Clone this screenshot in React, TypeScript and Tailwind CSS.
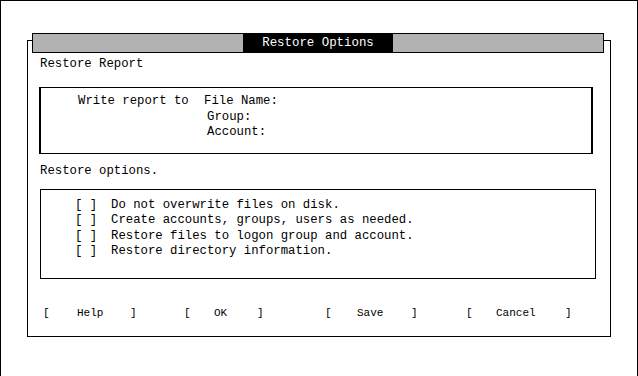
import React from "react";

const options = [
  "Do not overwrite files on disk.",
  "Create accounts, groups, users as needed.",
  "Restore files to logon group and account.",
  "Restore directory information.",
];

const buttons = [
  { label: "Help", left: 34, right: 53 },
  { label: "OK", left: 30, right: 43 },
  { label: "Save", left: 32, right: 54 },
  { label: "Cancel", left: 30, right: 69 },
];

const App = () => {
  return (
    <div className="w-[638px] h-[376px] bg-white overflow-hidden text-black font-['Liberation_Mono',monospace]">
      <div className="w-[638px] h-[376px] border-t border-l border-r border-black">
        <div className="ml-[26px] mt-[39px] w-[584px] h-[297px] border border-black flex flex-col">
          <div className="-mt-[8px] ml-[4px] w-[572px] h-[20px] border border-black bg-[#b2b2b2] flex justify-center">
            <div className="w-[150px] bg-black text-white text-[12.4px] leading-[18px] text-center">
              Restore Options
            </div>
          </div>

          <div className="mt-[4px] pl-[12px] text-[12.3px] leading-[15px]">
            Restore Report
          </div>

          <div className="mt-[15px] ml-[11px] w-[554px] h-[67px] border-t border-b border-l-2 border-r-2 border-black pt-[6px] pl-[37px] text-[12.3px] leading-[15.5px]">
            <div className="flex">
              <span className="w-[126px]">Write report to</span>
              <span>File Name:</span>
            </div>
            <div className="flex">
              <span className="w-[126px]"></span>
              <span className="pl-[3px]">Group:</span>
            </div>
            <div className="flex">
              <span className="w-[126px]"></span>
              <span className="pl-[3px]">Account:</span>
            </div>
          </div>

          <div className="mt-[10px] pl-[12px] text-[12.3px] leading-[15px]">
            Restore options.
          </div>

          <div className="mt-[10px] ml-[12px] w-[556px] h-[90px] border border-black pt-[8px] pl-[34px] text-[12.3px] leading-[15.33px]">
            {options.map((opt) => (
              <div key={opt} className="flex">
                <span className="w-[36px] whitespace-pre">[ ]</span>
                <span>{opt}</span>
              </div>
            ))}
          </div>

          <div className="mt-[27px] pl-[15px] flex text-[11px] leading-[15px]">
            {buttons.map((b) => (
              <div key={b.label} className="w-[141px] flex">
                <span style={{ width: b.left }}>[</span>
                <span style={{ width: b.right }}>{b.label}</span>
                <span>]</span>
              </div>
            ))}
          </div>
        </div>
      </div>
    </div>
  );
};

export default App;
